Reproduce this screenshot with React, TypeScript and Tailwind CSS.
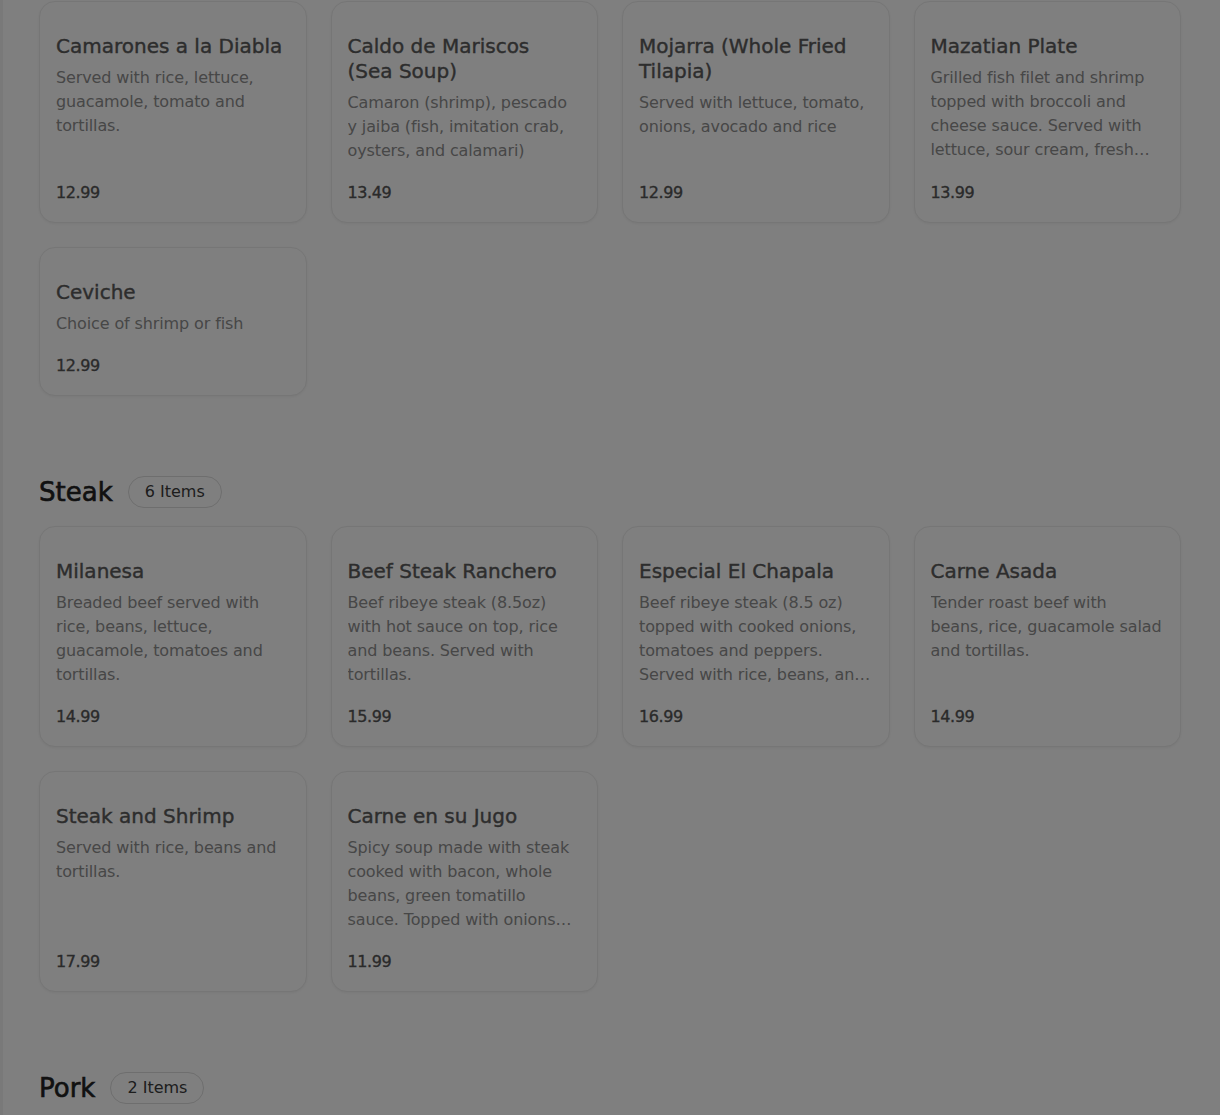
import React from 'react';

interface MenuItem {
  name: string;
  description: string;
  price: string;
}

interface MenuSection {
  id: string;
  title: string;
  showHeading: boolean;
  items: MenuItem[];
}

const sections: MenuSection[] = [
  {
    id: 'seafood',
    title: 'Seafood',
    showHeading: false,
    items: [
      {
        name: 'Camarones a la Diabla',
        description: 'Served with rice, lettuce, guacamole, tomato and tortillas.',
        price: '12.99',
      },
      {
        name: 'Caldo de Mariscos (Sea\u00A0Soup)',
        description: 'Camaron (shrimp), pescado y jaiba (fish, imitation crab, oysters, and calamari)',
        price: '13.49',
      },
      {
        name: 'Mojarra (Whole Fried Tilapia)',
        description: 'Served with lettuce, tomato, onions, avocado and rice',
        price: '12.99',
      },
      {
        name: 'Mazatian Plate',
        description:
          'Grilled fish filet and shrimp topped with broccoli and cheese sauce. Served with lettuce, sour cream, fresh pico de gallo and rice.',
        price: '13.99',
      },
      {
        name: 'Ceviche',
        description: 'Choice of shrimp or fish',
        price: '12.99',
      },
    ],
  },
  {
    id: 'steak',
    title: 'Steak',
    showHeading: true,
    items: [
      {
        name: 'Milanesa',
        description: 'Breaded beef served with rice, beans, lettuce, guacamole, tomatoes and tortillas.',
        price: '14.99',
      },
      {
        name: 'Beef Steak Ranchero',
        description: 'Beef ribeye steak (8.5oz) with hot sauce on top, rice and beans. Served with tortillas.',
        price: '15.99',
      },
      {
        name: 'Especial El Chapala',
        description:
          'Beef ribeye steak (8.5 oz) topped with cooked onions, tomatoes and peppers. Served with rice, beans, and tortillas.',
        price: '16.99',
      },
      {
        name: 'Carne Asada',
        description: 'Tender roast beef with beans, rice, guacamole salad and tortillas.',
        price: '14.99',
      },
      {
        name: 'Steak and Shrimp',
        description: 'Served with rice, beans and tortillas.',
        price: '17.99',
      },
      {
        name: 'Carne en su Jugo',
        description:
          'Spicy soup made with steak cooked with bacon, whole beans, green tomatillo sauce. Topped with onions and cilantro.',
        price: '11.99',
      },
    ],
  },
  {
    id: 'pork',
    title: 'Pork',
    showHeading: true,
    items: [
      {
        name: 'Carnitas',
        description: 'Fried pork served with rice, beans, guacamole, pico de gallo and tortillas.',
        price: '13.99',
      },
      {
        name: 'Chile Verde',
        description: 'Pork cooked in green tomatillo sauce. Served with rice, beans and tortillas.',
        price: '13.49',
      },
    ],
  },
];

function ItemCard({ item }: { item: MenuItem }) {
  return (
    <div className="flex flex-col rounded-2xl border border-[#ececec] bg-white px-4 pt-8 pb-4 shadow-[0_1px_3px_rgba(0,0,0,0.06)]">
      <h3 className="text-xl leading-[25px] text-[#5a5a5a] [-webkit-text-stroke:0.4px_#5a5a5a]">{item.name}</h3>
      <p className="mt-[7px] line-clamp-4 text-base leading-6 tracking-[-0.12px] text-[#8e8e8e]">
        {item.description}
      </p>
      <div className="mt-auto pt-[17px] text-base leading-[26px] tracking-tight text-[#555] [-webkit-text-stroke:0.35px_#555]">
        {item.price}
      </div>
    </div>
  );
}

function Section({ section }: { section: MenuSection }) {
  return (
    <section className="pb-20">
      {section.showHeading && (
        <div className="mb-[18px] flex h-8 items-center gap-[15px]">
          <h2 className="text-[26px] leading-8 text-[#222] [-webkit-text-stroke:0.6px_#222]">{section.title}</h2>
          <span className="flex h-8 items-center rounded-full border border-[#dcdcdc] px-4 text-base text-[#3a3a3a]">
            {section.items.length} Items
          </span>
        </div>
      )}
      <div className="grid grid-cols-4 gap-6">
        {section.items.map((item) => (
          <ItemCard key={item.name} item={item} />
        ))}
      </div>
    </section>
  );
}

export default function App() {
  return (
    <div className="relative min-h-screen bg-white font-['DejaVu_Sans',sans-serif]">
      <div className="border-l-[3px] border-[#f3f3f3] pt-px pl-9 pr-[39px]">
        {sections.map((section) => (
          <Section key={section.id} section={section} />
        ))}
      </div>
      <div className="fixed inset-0 bg-black/50" />
    </div>
  );
}
